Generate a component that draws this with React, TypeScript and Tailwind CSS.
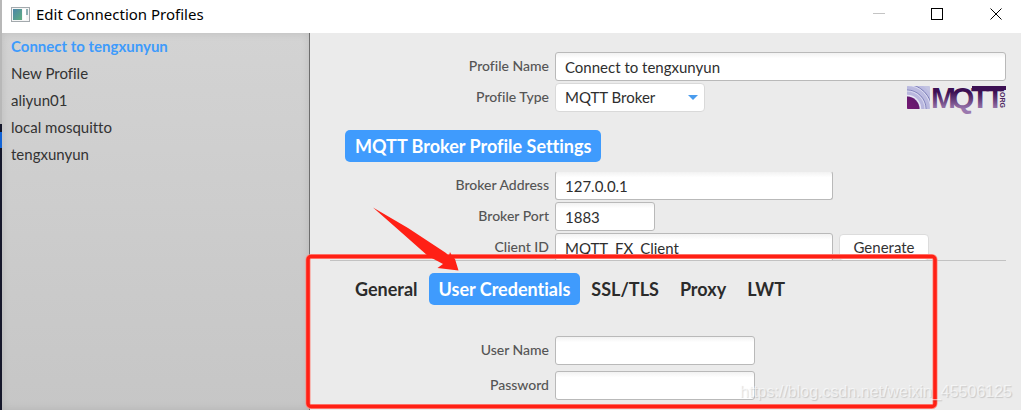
import { useState, type ReactNode } from "react";

const PROFILES = ["Connect to tengxunyun", "New Profile", "aliyun01", "local mosquitto", "tengxunyun"];
const TABS = ["General", "User Credentials", "SSL/TLS", "Proxy", "LWT"];

const FIELD =
  "h-[29px] rounded-[3px] border border-[#b9b9b9] bg-white bg-linear-to-b from-[#f2f2f2] to-white to-20% px-[9px] text-[15px] text-[#2e2e2e] outline-none";

function Row({ id, label, children }: { id: string; label: string; children: ReactNode }) {
  return (
    <div className="flex items-center gap-1.5">
      <label htmlFor={id} className="w-[204px] shrink-0 pb-0.5 text-right text-sm font-medium text-[#555]">
        {label}
      </label>
      {children}
    </div>
  );
}

function TitleBar() {
  return (
    <header className="flex h-[33px] shrink-0 items-center bg-white text-black">
      <svg viewBox="0 0 19 16" className="mb-1 ml-[9px] h-4 w-[19px]" aria-hidden="true">
        <rect x="0.5" y="0.5" width="18" height="14" fill="#f6f6f6" stroke="#a3a9ad" />
        <rect x="2" y="2" width="9" height="11" fill="url(#app)" />
        <rect x="12" y="2" width="3" height="11" fill="#fff" />
        <rect x="15" y="2" width="2" height="6" fill="#8fb0b4" />
        <defs>
          <linearGradient id="app" x1="0" y1="0" x2="1" y2="1">
            <stop offset="0" stopColor="#4d86a8" />
            <stop offset="1" stopColor="#5fae80" />
          </linearGradient>
        </defs>
      </svg>
      <h1 className="ml-1.5 pb-1 font-['Noto_Sans',sans-serif] text-[15px]">Edit Connection Profiles</h1>
      <div className="mr-[17px] ml-auto flex gap-[44px] pb-1">
        <button aria-label="Minimize">
          <svg viewBox="0 0 15 14" className="h-3.5 w-[15px]" fill="none" stroke="#c4c4c4">
            <path d="M2 5.5h12" />
          </svg>
        </button>
        <button aria-label="Maximize">
          <svg viewBox="0 0 15 14" className="h-3.5 w-[15px]" fill="none" stroke="#000">
            <rect x="1.5" y="0.5" width="11" height="11" />
          </svg>
        </button>
        <button aria-label="Close">
          <svg viewBox="0 0 15 14" className="h-3.5 w-[15px]" fill="none" stroke="#000">
            <path d="M1.5 0.5l11 11M12.5 0.5l-11 11" />
          </svg>
        </button>
      </div>
    </header>
  );
}

function MqttLogo() {
  return (
    <svg viewBox="0 0 100 26" className="h-[26px] w-[100px] overflow-visible" role="img" aria-label="MQTT.org">
      <defs>
        <linearGradient id="letters" gradientUnits="userSpaceOnUse" x1="0" y1="0" x2="0" y2="24">
          <stop offset="0.3" stopColor="#3c1053" />
          <stop offset="1" stopColor="#9a78ae" />
        </linearGradient>
        <linearGradient id="waves" x1="0" y1="1" x2="1" y2="0">
          <stop offset="0" stopColor="#a9a4d2" />
          <stop offset="1" stopColor="#c0c1e4" />
        </linearGradient>
        <linearGradient id="core" x1="0" y1="1" x2="1" y2="0">
          <stop offset="0" stopColor="#8e1a80" />
          <stop offset="1" stopColor="#5b1768" />
        </linearGradient>
        <clipPath id="tile">
          <rect x="1" y="1" width="23" height="23" rx="1" />
        </clipPath>
      </defs>
      <g clipPath="url(#tile)">
        <rect x="1" y="1" width="23" height="23" fill="#c3c4e2" />
        <circle cx="1" cy="24" r="28" fill="url(#waves)" />
        <g fill="none">
          <circle cx="1" cy="24" r="24.5" stroke="#7d7fb8" />
          <circle cx="1" cy="24" r="23.5" stroke="#dcdcf0" />
          <circle cx="1" cy="24" r="19" stroke="#7d7fb8" />
          <circle cx="1" cy="24" r="18" stroke="#dcdcf0" />
          <circle cx="1" cy="24" r="13.5" stroke="#e8e6f4" strokeWidth="1.5" />
        </g>
        <circle cx="1" cy="24" r="12.5" fill="url(#core)" />
      </g>
      <text
        x="25 45 65 80"
        y="23"
        fill="url(#letters)"
        className="font-['Liberation_Sans',sans-serif] text-[30px] font-bold"
      >
        MQTT
      </text>
      <rect x="66" y="1" width="34" height="4" fill="#3c1053" />
      <text
        transform="translate(94 5) rotate(90)"
        fill="#4a2562"
        className="font-['Liberation_Sans',sans-serif] text-[7px] font-bold"
      >
        .ORG
      </text>
    </svg>
  );
}

/** Red frame and arrow pointing at the credentials tab. */
function Callout() {
  return (
    <svg
      viewBox="0 0 640 210"
      className="pointer-events-none absolute top-[202px] left-[304px] h-[210px] w-[640px]"
      aria-hidden="true"
    >
      <rect x="4" y="54.5" width="627" height="150" rx="3" fill="none" stroke="#ff8a80" strokeWidth="5" />
      <rect x="4" y="54.5" width="627" height="150" rx="3" fill="none" stroke="#ff2015" strokeWidth="3.5" />
      <path d="M69 5.5L104 26L142 51L145 54L146 50L148 54L151 57L154.5 68.5L133.5 66L139 62L124 54L98 31Z" fill="#ff2015" />
    </svg>
  );
}

export default function App() {
  const [profile, setProfile] = useState(PROFILES[0]);
  const [tab, setTab] = useState("User Credentials");

  return (
    <div className="relative flex h-screen flex-col overflow-hidden bg-[#ebebeb] font-[Lato,sans-serif] [font-variant-ligatures:none]">
      <div className="flex min-h-0 flex-1">
        <div className="flex w-0.5 shrink-0 flex-col">
          <div className="h-[124px] bg-[#b8b8b8]" />
          <div className="h-2 bg-[#15172a]" />
          <div className="h-4 bg-[#1263d6]" />
          <div className="flex-1 bg-[#15172a]" />
        </div>
        <div className="flex min-w-0 flex-1 flex-col">
          <TitleBar />
          <div className="flex min-h-0 flex-1">
            <nav
              aria-label="Profiles"
              className="w-[308px] shrink-0 border-r border-[#6e6e6e] bg-linear-to-b from-[#d3d3d3] to-[#c6c6c6] shadow-[inset_0_0_8px_rgba(0,0,0,0.1)]"
            >
              <ul>
                {PROFILES.map((p) => (
                  <li key={p}>
                    <button
                      onClick={() => setProfile(p)}
                      className={`block h-[27px] w-full px-[9px] text-left text-[15px] ${
                        p === profile ? "font-bold text-[#3e9bfc]" : "text-[#333]"
                      }`}
                    >
                      {p}
                    </button>
                  </li>
                ))}
              </ul>
            </nav>

            <main className="min-w-0 flex-1 pr-[15px] pl-5">
              <section className="flex flex-col gap-0.5 pt-[19px] pl-[15px]">
                <Row id="name" label="Profile Name">
                  <input id="name" defaultValue="Connect to tengxunyun" className={`${FIELD} min-w-0 flex-1`} />
                </Row>
                <Row id="type" label="Profile Type">
                  <div className="relative">
                    <select
                      id="type"
                      className="h-[29px] w-[150px] appearance-none rounded border border-[#d9d9d9] bg-white px-[9px] text-[15px] text-[#2e2e2e]"
                    >
                      <option>MQTT Broker</option>
                    </select>
                    <svg
                      viewBox="0 0 10 5"
                      className="pointer-events-none absolute top-3 right-[7px] h-[5px] w-2.5"
                      aria-hidden="true"
                    >
                      <path d="M0 0h10L5 5z" fill="#4a9cee" />
                    </svg>
                  </div>
                  <div className="ml-auto">
                    <MqttLogo />
                  </div>
                </Row>
              </section>

              <h2 className="mt-[18px] ml-[15px] flex h-8 w-fit items-center rounded-[5px] bg-[#3f9bfd] px-2.5 text-lg font-bold text-white">
                MQTT Broker Profile Settings
              </h2>

              <section className="mt-2 flex h-[91px] flex-col gap-0.5 overflow-hidden border-b border-[#c2c2c2] pt-px pl-[15px]">
                <Row id="address" label="Broker Address">
                  <input
                    id="address"
                    defaultValue="127.0.0.1"
                    className={`${FIELD} w-[278px] border-t-[#ebebeb]`}
                  />
                </Row>
                <Row id="port" label="Broker Port">
                  <input id="port" defaultValue="1883" className={`${FIELD} w-[100px]`} />
                </Row>
                <Row id="client" label="Client ID">
                  <input id="client" defaultValue="MQTT_FX_Client" className={`${FIELD} w-[278px]`} />
                  <button className="h-[27px] w-[90px] rounded border border-[#dcdcdc] bg-white text-[15px] text-[#333]">
                    Generate
                  </button>
                </Row>
              </section>

              <div role="tablist" aria-label="Broker settings" className="mt-3 ml-[15px] flex gap-px">
                {TABS.map((t) => (
                  <button
                    key={t}
                    role="tab"
                    aria-selected={t === tab}
                    onClick={() => setTab(t)}
                    className={`h-8 rounded-[5px] px-2.5 text-lg font-bold whitespace-nowrap ${
                      t === tab ? "bg-[#3f9bfd] text-white" : "text-[#2b2b2b]"
                    }`}
                  >
                    {t}
                  </button>
                ))}
              </div>

              <section className="mt-[31px] flex flex-col gap-1.5 pl-[15px]">
                <Row id="user" label="User Name">
                  <input id="user" className={`${FIELD} w-[200px]`} />
                </Row>
                <Row id="password" label="Password">
                  <input id="password" type="password" className={`${FIELD} w-[200px]`} />
                </Row>
              </section>
            </main>
          </div>
        </div>
      </div>

      <Callout />
      <p className="absolute right-[9px] bottom-1.5 font-['Liberation_Sans',sans-serif] text-base text-white/60 [text-shadow:1px_1px_1px_rgba(0,0,0,0.15)]">
        https://blog.csdn.net/weixin_45506125
      </p>
    </div>
  );
}
